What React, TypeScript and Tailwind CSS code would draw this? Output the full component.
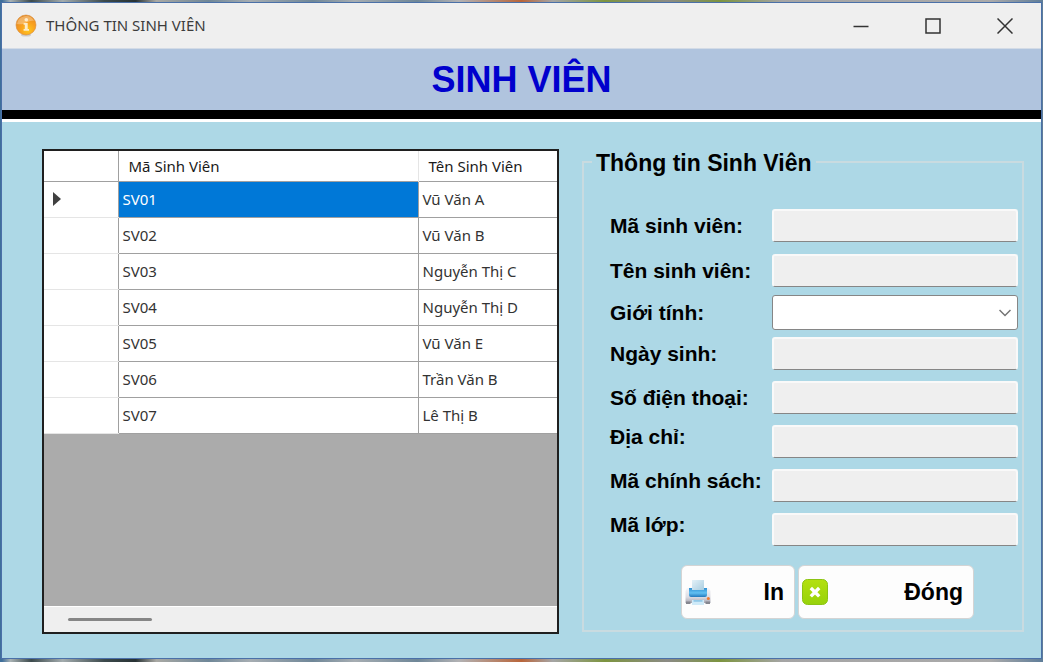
import React from "react";

const students = [
  { id: "SV01", name: "Vũ Văn A" },
  { id: "SV02", name: "Vũ Văn B" },
  { id: "SV03", name: "Nguyễn Thị C" },
  { id: "SV04", name: "Nguyễn Thị D" },
  { id: "SV05", name: "Vũ Văn E" },
  { id: "SV06", name: "Trần Văn B" },
  { id: "SV07", name: "Lê Thị B" },
];

function InfoIcon() {
  return (
    <svg viewBox="0 0 22 24" className="h-6 w-[22px]" aria-hidden="true">
      <defs>
        <radialGradient id="info-ball" cx="0.6" cy="0.75" r="0.75">
          <stop offset="0" stopColor="#ffc81e" />
          <stop offset="0.5" stopColor="#f9a01f" />
          <stop offset="1" stopColor="#e58a22" />
        </radialGradient>
      </defs>
      <ellipse cx="11" cy="21" rx="5" ry="1.5" fill="#cfcfcf" />
      <circle cx="11" cy="11" r="10" fill="url(#info-ball)" stroke="#d98a35" strokeWidth="0.6" />
      <path d="M2 10a9 9 0 0 1 17-3c-5-2-10 5-17 3z" fill="#fff" opacity="0.3" />
      <circle cx="11.3" cy="5.8" r="1.8" fill="#fdeccb" />
      <path d="M8.6 9h4.1v6h1.300v1.800H8.600V15h1.200v-4.200H8.600z" fill="#fdeccb" />
    </svg>
  );
}

function PrinterIcon() {
  return (
    <svg viewBox="0 0 26 26" className="size-[26px] shrink-0" aria-hidden="true">
      <defs>
        <linearGradient id="print-body" x1="0" y1="0" x2="0" y2="1">
          <stop offset="0" stopColor="#f6f6f9" />
          <stop offset="0.6" stopColor="#dcdce3" />
          <stop offset="1" stopColor="#a4a5b0" />
        </linearGradient>
        <linearGradient id="print-tray" x1="0" y1="0" x2="0" y2="1">
          <stop offset="0" stopColor="#2f8fd2" />
          <stop offset="0.55" stopColor="#62c0f2" />
          <stop offset="1" stopColor="#2379bd" />
        </linearGradient>
        <linearGradient id="print-paper" x1="0" y1="0" x2="1" y2="1">
          <stop offset="0" stopColor="#e3f1f8" />
          <stop offset="1" stopColor="#a9cde0" />
        </linearGradient>
      </defs>
      <path d="M2 9h22l1.500 3v12h-25V12z" fill="url(#print-body)" />
      <path d="M1 22.500h4.500V25H1zM20.500 22.500H25V25h-4.500z" fill="#85868f" />
      <path d="M7 1h12v10H7z" fill="url(#print-paper)" />
      <path d="M4 9h3v2h12V9h3v7q0 2-2 2H6q-2 0-2-2z" fill="url(#print-tray)" />
      <path d="M7 21h12v5H7z" fill="#cfeaf8" />
      <path d="M8.500 21h9v1.800h-9z" fill="#92c9e8" />
      <circle cx="23.300" cy="19.500" r="1.500" fill="#f27a31" />
    </svg>
  );
}

function CloseIcon() {
  return (
    <svg viewBox="0 0 26 26" className="size-[26px] shrink-0" aria-hidden="true">
      <defs>
        <linearGradient id="close-tile" x1="0" y1="0" x2="0" y2="1">
          <stop offset="0" stopColor="#b4e00f" />
          <stop offset="1" stopColor="#97d20b" />
        </linearGradient>
      </defs>
      <rect x="0.500" y="0.500" width="25" height="25" rx="5" fill="url(#close-tile)" stroke="#8cc414" />
      <path d="M8.800 9l8.400 8.400M17.200 9l-8.400 8.400" stroke="#fff" strokeWidth="3.400" />
    </svg>
  );
}

const labelClass = "text-[21px] leading-6 font-bold text-black whitespace-nowrap";

function TextRow({ id, label, high = false }: { id: string; label: string; high?: boolean }) {
  return (
    <div className={high ? "flex items-start" : "flex items-center"}>
      <label htmlFor={id} className={`${labelClass} w-[162px] shrink-0`}>
        {label}
      </label>
      <input
        id={id}
        type="text"
        readOnly
        className="h-[33px] min-w-0 flex-1 rounded-[3px] border-2 border-b border-[#f9f9f9] border-b-[#868686] bg-[#efefef] px-1 text-base outline-none"
      />
    </div>
  );
}

export default function App() {
  return (
    <div className="flex min-h-screen flex-col bg-[linear-gradient(to_right,#3f6f9b_0%,#3f6f9b_0.2%,#a9b2b4_1%,#3c4a4c_3%,#a3acae_6%,#3c4a4c_10%,#283234_13%,#a9a9a4_15%,#6f8798_20%,#a6adb2_24%,#6f8798_30%,#a6adb2_34%,#6f8798_40%,#b2b2b4_44%,#b9653a_50%,#a5a5a5_53%,#7d9440_58%,#8b8b85_64%,#7d9440_69%,#a5a5a5_75%,#aaaaaa_95%,#5f7d99_100%)] pt-0.5 pr-px pb-[3px] pl-px font-['Liberation_Sans',Arial,sans-serif]">
      <main className="flex flex-1 flex-col border border-[#4a70a8] bg-[#add8e6]">
        <header className="flex h-[46px] shrink-0 items-center border-b border-[#d3dbe6] bg-[#efefef] pl-[13px]">
          <InfoIcon />
          <span className="ml-[9px] font-['Noto_Sans',sans-serif] text-[15px] text-[#3c3c3c]">THÔNG TIN SINH VIÊN</span>
          <div className="ml-auto flex h-full">
            <button type="button" aria-label="Thu nhỏ" className="grid w-[72px] place-items-center">
              <svg viewBox="0 0 16 16" className="size-4" fill="none" stroke="#333" strokeWidth="1.500"><path d="M0.500 8.500h15" /></svg>
            </button>
            <button type="button" aria-label="Phóng to" className="grid w-[72px] place-items-center">
              <svg viewBox="0 0 16 16" className="size-4" fill="none" stroke="#333" strokeWidth="1.500"><path d="M1 1h14v14H1z" /></svg>
            </button>
            <button type="button" aria-label="Đóng cửa sổ" className="grid w-[72px] place-items-center">
              <svg viewBox="0 0 16 16" className="size-4" fill="none" stroke="#333" strokeWidth="1.500"><path d="M0.500 0.500l15 15M15.500 0.500l-15 15" /></svg>
            </button>
          </div>
        </header>

        <div className="flex h-[61px] shrink-0 items-center justify-center bg-[#b0c4de]">
          <h1 className="text-[36px] leading-none font-bold text-[#0000cd]">SINH VIÊN</h1>
        </div>
        <div className="h-3 shrink-0 border-b-[3px] border-white bg-black" />

        <div className="grid flex-1 grid-cols-[517fr_442fr] gap-[23px] pt-[27px] pr-[17px] pb-6 pl-10">
          <section className="flex min-w-0 flex-col border-2 border-[#1f1f1f] bg-[#ababab]">
            <div className="overflow-hidden">
              <table className="w-full table-fixed border-collapse bg-white font-['Noto_Sans',sans-serif] text-[15px] leading-5 text-[#333]">
                <colgroup>
                  <col className="w-[74px]" />
                  <col className="w-[300px]" />
                  <col />
                </colgroup>
                <thead>
                  <tr className="h-[30px] border-b border-[#a0a0a0] text-left text-[#1a1a1a]">
                    <th className="border-r border-[#a0a0a0]" aria-label="Chọn" />
                    <th className="border-r border-[#e5e5e5] pl-2.5 font-normal">Mã Sinh Viên</th>
                    <th className="pl-2.5 font-normal">Tên Sinh Viên</th>
                  </tr>
                </thead>
                <tbody>
                  {students.map((s, i) => (
                    <tr key={s.id} className="h-9">
                      <td className="border-r border-b border-r-[#a0a0a0] border-b-[#e5e5e5] pl-[9px]">
                        {i === 0 && (
                          <svg viewBox="0 0 8 14" className="block h-3.5 w-2" fill="#404040" aria-hidden="true"><path d="M0 0l8 7-8 7z" /></svg>
                        )}
                      </td>
                      <td className={i === 0 ? "border-r border-b border-[#a0a0a0] bg-[#0078d7] pl-1 text-white" : "border-r border-b border-[#a0a0a0] pl-1"}>
                        {s.id}
                      </td>
                      <td className="border-b border-[#a0a0a0] pl-1">{s.name}</td>
                    </tr>
                  ))}
                </tbody>
              </table>
            </div>
            <div className="mt-auto flex h-[26px] items-center border-t border-white bg-[#efefef] pl-6">
              <div className="h-[3px] w-[84px] rounded-full bg-[#868686]" />
            </div>
          </section>

          <fieldset className="mb-0.5 min-w-0 border-2 border-[#c9dbe0] pr-1 pl-[26px]">
            <legend className="-ml-[18px] px-1 pt-0.5 text-[23px] leading-6 font-bold text-black">Thông tin Sinh Viên</legend>
            <div className="flex flex-col pt-[34px]">
              <div className="flex flex-col gap-3">
                <TextRow id="ma-sv" label="Mã sinh viên:" />
                <TextRow id="ten-sv" label="Tên sinh viên:" />
              </div>
              <div className="mt-2 mb-[7px] flex items-center">
                <label htmlFor="gioi-tinh" className={`${labelClass} w-[162px] shrink-0`}>
                  Giới tính:
                </label>
                <div className="grid min-w-0 flex-1">
                  <select id="gioi-tinh" defaultValue="" className="col-start-1 row-start-1 h-[35px] w-full appearance-none rounded-[3px] border border-[#868686] bg-white px-2 text-base">
                    <option value=""></option>
                    <option value="nam">Nam</option>
                    <option value="nu">Nữ</option>
                  </select>
                  <svg viewBox="0 0 12 8" className="pointer-events-none col-start-1 row-start-1 mr-[7px] h-2 w-3 self-center justify-self-end" fill="none" stroke="#757575" strokeWidth="1.500" aria-hidden="true"><path d="M0.500 1l5.500 5.500L11.500 1" /></svg>
                </div>
              </div>
              <div className="flex flex-col gap-[11px]">
                <TextRow id="ngay-sinh" label="Ngày sinh:" />
                <TextRow id="dien-thoai" label="Số điện thoại:" />
                <TextRow id="dia-chi" label="Địa chỉ:" high />
                <TextRow id="chinh-sach" label="Mã chính sách:" high />
                <TextRow id="ma-lop" label="Mã lớp:" high />
              </div>
              <div className="mt-[19px] mr-11 flex justify-end gap-[3px] text-[23px] leading-none font-bold text-black">
                <button type="button" className="flex h-[54px] w-[114px] items-center justify-between rounded-md border border-[#d4d4d4] bg-[#fdfdfd] pr-2.5 pl-[3px]">
                  <PrinterIcon />
                  In
                </button>
                <button type="button" className="flex h-[54px] w-[176px] items-center justify-between rounded-md border border-[#d4d4d4] bg-[#fdfdfd] pr-2.5 pl-[3px]">
                  <CloseIcon />
                  Đóng
                </button>
              </div>
            </div>
          </fieldset>
        </div>
      </main>
    </div>
  );
}
